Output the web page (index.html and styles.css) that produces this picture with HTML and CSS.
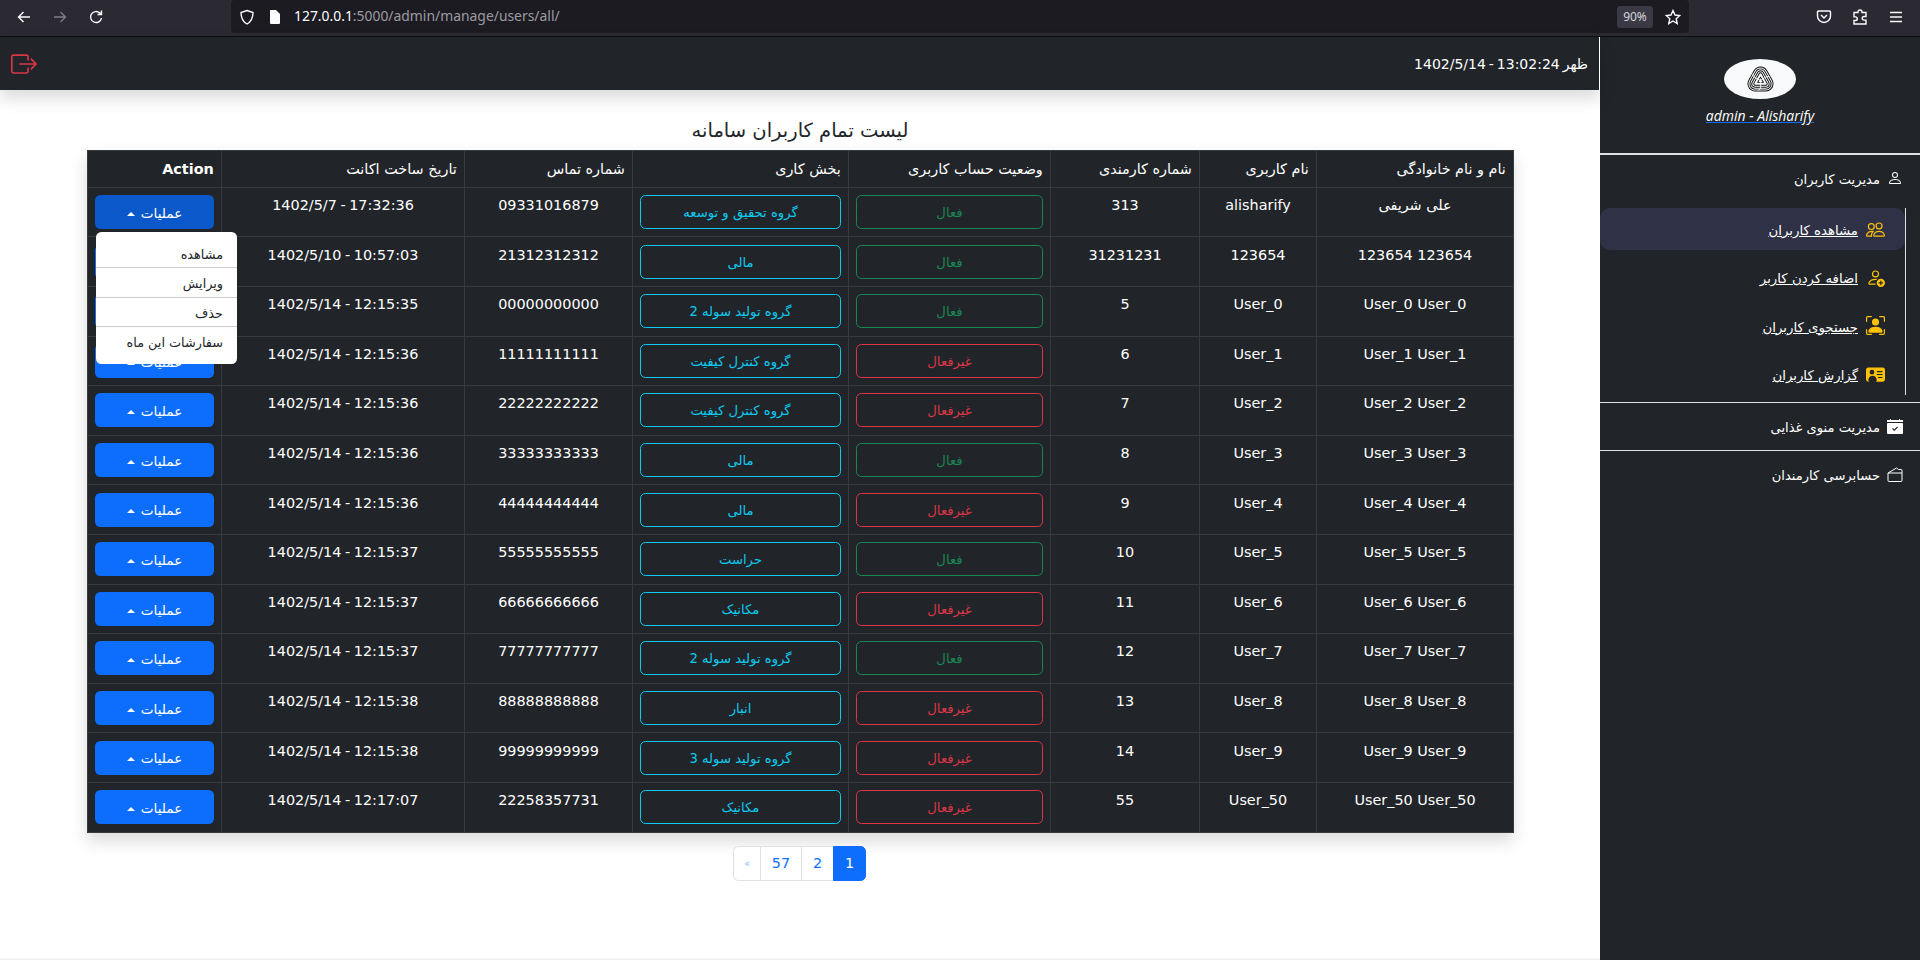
FILE: index.html
```html
<!DOCTYPE html>
<html lang="fa">
<head>
	<meta charset="utf-8">
	<title>Users</title>
	<link rel="stylesheet" href="styles.css">
</head>
<body>
	<div class="toolbar">
		<div class="nav-btns">
			<svg class="tb-icon" viewBox="0 0 16 16"><path d="M14 8H2.5M7.5 3 2.5 8l5 5"/></svg>
			<svg class="tb-icon off" viewBox="0 0 16 16"><path d="M2 8h11.500M8.500 3l5 5-5 5"/></svg>
			<svg class="tb-icon" viewBox="0 0 16 16"><path d="M13.500 9a5.500 5.500 0 1 1-1.800-5.100L13.500 5.500M13.500 1.500v4h-4"/></svg>
		</div>
		<div class="urlbar">
			<svg class="tb-icon shield" viewBox="0 0 16 16"><path d="M8 1.500 14 3.500c0 5.500-1.500 9-6 11.500-4.500-2.500-6-6-6-11.500z"/></svg>
			<svg class="tb-icon page" viewBox="0 0 16 16"><path class="solid" d="M3 1h6l4 4v9a1 1 0 0 1-1 1H4a1 1 0 0 1-1-1z"/></svg>
			<span class="url"><b>127.0.0.1</b>:5000/admin/manage/users/all/</span>
			<span class="zoom-pill">90%</span>
			<svg class="tb-icon star" viewBox="0 0 16 16"><path d="M8 1.500 10 6l4.800.5-3.600 3.200 1 4.800L8 12l-4.200 2.500 1-4.800L1.200 6.500 6 6z"/></svg>
		</div>
		<div class="tb-right">
			<svg class="tb-icon" viewBox="0 0 16 16"><path d="M2.500 2h11a1 1 0 0 1 1 1v4a6.500 6.500 0 0 1-13 0V3a1 1 0 0 1 1-1zM5 6l3 3 3-3"/></svg>
			<svg class="tb-icon" viewBox="0 0 16 16"><path d="M6 3.500V3a2 2 0 0 1 4 0v.5h4v4h-2a1.800 1.800 0 0 0 0 3.600h2V15H2v-3.500h1.500a1.800 1.800 0 0 0 0-3.600H2V3.500z"/></svg>
			<svg class="tb-icon" viewBox="0 0 16 16"><path d="M2 3.500h12M2 8h12M2 12.500h12"/></svg>
		</div>
	</div>

	<div class="app">
		<div class="main">
			<div class="topbar">
				<svg class="logout" viewBox="0 0 16 16"><path fill-rule="evenodd" d="M10 12.500a.5.5 0 0 1-.5.5h-8a.5.5 0 0 1-.5-.5v-9a.5.5 0 0 1 .5-.5h8a.5.5 0 0 1 .5.5v2a.5.5 0 0 0 1 0v-2A1.500 1.500 0 0 0 9.500 2h-8A1.500 1.500 0 0 0 0 3.500v9A1.500 1.500 0 0 0 1.500 14h8a1.500 1.500 0 0 0 1.500-1.500v-2a.5.5 0 0 0-1 0v2z"/><path fill-rule="evenodd" d="M15.854 8.354a.5.5 0 0 0 0-.708l-3-3a.5.5 0 0 0-.708.708L14.293 7.500H5.500a.5.5 0 0 0 0 1h8.793l-2.147 2.146a.5.5 0 0 0 .708.708l3-3z"/></svg>
				<span class="clock" dir="rtl">ظهر 13:02:24 - 1402/5/14</span>
			</div>

			<div class="content">
				<h4 class="title">لیست تمام کاربران سامانه</h4>
				<div class="table-wrap">
					<table class="users" dir="rtl">
						<colgroup>
							<col class="c-name"><col class="c-user"><col class="c-num"><col class="c-status"><col class="c-dept"><col class="c-phone"><col class="c-date"><col class="c-action">
						</colgroup>
						<thead>
							<tr>
								<th>نام و نام خانوادگی</th>
								<th>نام کاربری</th>
								<th>شماره کارمندی</th>
								<th>وضعیت حساب کاربری</th>
								<th>بخش کاری</th>
								<th>شماره تماس</th>
								<th>تاریخ ساخت اکانت</th>
								<th class="action-head">Action</th>
							</tr>
						</thead>
						<tbody>
							<tr>
								<td>علی شریفی</td><td>alisharify</td><td>313</td>
								<td><a class="pill on">فعال</a></td><td><a class="pill dept">گروه تحقیق و توسعه</a></td>
								<td>09331016879</td><td class="when">17:32:36 - 1402/5/7</td>
								<td class="action-cell">
									<button class="ops pressed">عملیات<i class="caret"></i></button>
									<ul class="menu">
										<li>مشاهده</li>
										<li>ویرایش</li>
										<li>حذف</li>
										<li>سفارشات این ماه</li>
									</ul>
								</td>
							</tr>
							<tr>
								<td>123654 123654</td><td>123654</td><td>31231231</td>
								<td><a class="pill on">فعال</a></td><td><a class="pill dept">مالی</a></td>
								<td>21312312312</td><td class="when">10:57:03 - 1402/5/10</td>
								<td><button class="ops">عملیات<i class="caret"></i></button></td>
							</tr>
							<tr>
								<td>User_0 User_0</td><td>User_0</td><td>5</td>
								<td><a class="pill on">فعال</a></td><td><a class="pill dept">گروه تولید سوله 2</a></td>
								<td>00000000000</td><td class="when">12:15:35 - 1402/5/14</td>
								<td><button class="ops">عملیات<i class="caret"></i></button></td>
							</tr>
							<tr>
								<td>User_1 User_1</td><td>User_1</td><td>6</td>
								<td><a class="pill off">غیرفعال</a></td><td><a class="pill dept">گروه کنترل کیفیت</a></td>
								<td>11111111111</td><td class="when">12:15:36 - 1402/5/14</td>
								<td><button class="ops">عملیات<i class="caret"></i></button></td>
							</tr>
							<tr>
								<td>User_2 User_2</td><td>User_2</td><td>7</td>
								<td><a class="pill off">غیرفعال</a></td><td><a class="pill dept">گروه کنترل کیفیت</a></td>
								<td>22222222222</td><td class="when">12:15:36 - 1402/5/14</td>
								<td><button class="ops">عملیات<i class="caret"></i></button></td>
							</tr>
							<tr>
								<td>User_3 User_3</td><td>User_3</td><td>8</td>
								<td><a class="pill on">فعال</a></td><td><a class="pill dept">مالی</a></td>
								<td>33333333333</td><td class="when">12:15:36 - 1402/5/14</td>
								<td><button class="ops">عملیات<i class="caret"></i></button></td>
							</tr>
							<tr>
								<td>User_4 User_4</td><td>User_4</td><td>9</td>
								<td><a class="pill off">غیرفعال</a></td><td><a class="pill dept">مالی</a></td>
								<td>44444444444</td><td class="when">12:15:36 - 1402/5/14</td>
								<td><button class="ops">عملیات<i class="caret"></i></button></td>
							</tr>
							<tr>
								<td>User_5 User_5</td><td>User_5</td><td>10</td>
								<td><a class="pill on">فعال</a></td><td><a class="pill dept">حراست</a></td>
								<td>55555555555</td><td class="when">12:15:37 - 1402/5/14</td>
								<td><button class="ops">عملیات<i class="caret"></i></button></td>
							</tr>
							<tr>
								<td>User_6 User_6</td><td>User_6</td><td>11</td>
								<td><a class="pill off">غیرفعال</a></td><td><a class="pill dept">مکانیک</a></td>
								<td>66666666666</td><td class="when">12:15:37 - 1402/5/14</td>
								<td><button class="ops">عملیات<i class="caret"></i></button></td>
							</tr>
							<tr>
								<td>User_7 User_7</td><td>User_7</td><td>12</td>
								<td><a class="pill on">فعال</a></td><td><a class="pill dept">گروه تولید سوله 2</a></td>
								<td>77777777777</td><td class="when">12:15:37 - 1402/5/14</td>
								<td><button class="ops">عملیات<i class="caret"></i></button></td>
							</tr>
							<tr>
								<td>User_8 User_8</td><td>User_8</td><td>13</td>
								<td><a class="pill off">غیرفعال</a></td><td><a class="pill dept">انبار</a></td>
								<td>88888888888</td><td class="when">12:15:38 - 1402/5/14</td>
								<td><button class="ops">عملیات<i class="caret"></i></button></td>
							</tr>
							<tr>
								<td>User_9 User_9</td><td>User_9</td><td>14</td>
								<td><a class="pill off">غیرفعال</a></td><td><a class="pill dept">گروه تولید سوله 3</a></td>
								<td>99999999999</td><td class="when">12:15:38 - 1402/5/14</td>
								<td><button class="ops">عملیات<i class="caret"></i></button></td>
							</tr>
							<tr>
								<td>User_50 User_50</td><td>User_50</td><td>55</td>
								<td><a class="pill off">غیرفعال</a></td><td><a class="pill dept">مکانیک</a></td>
								<td>22258357731</td><td class="when">12:17:07 - 1402/5/14</td>
								<td><button class="ops">عملیات<i class="caret"></i></button></td>
							</tr>
						</tbody>
					</table>
				</div>

				<div class="pager">
					<a class="page-link faded">«</a>
					<a class="page-link w-57">57</a>
					<a class="page-link">2</a>
					<a class="page-link current">1</a>
				</div>
			</div>
		</div>

		<aside class="sidebar">
			<div class="brand">
				<div class="logo">
					<svg viewBox="0 0 28 27">
						<g stroke-linejoin="round">
							<polygon class="ring-k" stroke-width="16" points="14,8.5 8.500,18.500 19.500,18.500"/>
							<polygon class="ring-w" stroke-width="14" points="14,8.5 8.500,18.500 19.500,18.500"/>
							<polygon class="ring-k" stroke-width="12" points="14,8.5 8.500,18.500 19.500,18.500"/>
							<polygon class="ring-w" stroke-width="10" points="14,8.5 8.500,18.500 19.500,18.500"/>
							<polygon class="ring-k" stroke-width="8" points="14,8.5 8.500,18.500 19.500,18.500"/>
							<polygon class="ring-w" stroke-width="6" points="14,8.5 8.500,18.500 19.500,18.500"/>
							<polygon class="ring-k" stroke-width="4" points="14,8.5 8.500,18.500 19.500,18.500"/>
							<polygon class="ring-w" stroke-width="2" points="14,8.5 8.500,18.500 19.500,18.500"/>
						</g>
						<g class="swirl">
							<path d="M14 15C17 13 22 9 24 12"/>
							<path d="M14 15C17 13 22 9 24 12" transform="rotate(120 14 15)"/>
							<path d="M14 15C17 13 22 9 24 12" transform="rotate(240 14 15)"/>
						</g>
					</svg>
				</div>
				<a class="who">admin - Alisharify</a>
			</div>

			<div class="menu-head first">
				<svg class="head-icon" viewBox="0 0 16 16"><path d="M8 8a3 3 0 1 0 0-6 3 3 0 0 0 0 6Zm2-3a2 2 0 1 1-4 0 2 2 0 0 1 4 0Zm4 8c0 1-1 1-1 1H3s-1 0-1-1 1-4 6-4 6 3 6 4Zm-1-.004c-.001-.246-.154-.986-.832-1.664C11.516 10.680 10.289 10 8 10c-2.290 0-3.516.680-4.168 1.332-.678.678-.830 1.418-.832 1.664h10Z"/></svg>
				<span>مدیریت کاربران</span>
			</div>
			<div class="submenu">
				<a class="sub active">
					<svg class="sub-icon" viewBox="0 0 16 16"><path d="M15 14s1 0 1-1-1-4-5-4-5 3-5 4 1 1 1 1h8Zm-7.978-1A.261.261 0 0 1 7 12.996c.001-.264.167-1.030.76-1.720C8.312 10.629 9.282 10 11 10c1.717 0 2.687.630 3.240 1.276.593.690.758 1.457.760 1.720l-.008.002a.274.274 0 0 1-.014.002H7.022ZM11 7a2 2 0 1 0 0-4 2 2 0 0 0 0 4Zm3-2a3 3 0 1 1-6 0 3 3 0 0 1 6 0ZM6.936 9.280a5.880 5.880 0 0 0-1.230-.247A7.350 7.350 0 0 0 5 9c-4 0-5 3-5 4 0 .667.333 1 1 1h4.216A2.238 2.238 0 0 1 5 13c0-1.010.377-2.042 1.090-2.904.243-.294.526-.569.846-.816ZM4.920 10A5.493 5.493 0 0 0 4 13H1c0-.260.164-1.030.760-1.724.545-.636 1.492-1.256 3.160-1.275ZM1.500 5.500a3 3 0 1 1 6 0 3 3 0 0 1-6 0Zm3-2a2 2 0 1 0 0 4 2 2 0 0 0 0-4Z"/></svg>
					<span>مشاهده کاربران</span>
				</a>
				<a class="sub">
					<svg class="sub-icon" viewBox="0 0 16 16"><path d="M12.500 16a3.500 3.500 0 1 0 0-7 3.500 3.500 0 0 0 0 7Zm.5-5v1h1a.5.5 0 0 1 0 1h-1v1a.5.5 0 0 1-1 0v-1h-1a.5.5 0 0 1 0-1h1v-1a.5.5 0 0 1 1 0Zm-2-6a3 3 0 1 1-6 0 3 3 0 0 1 6 0ZM8 7a2 2 0 1 0 0-4 2 2 0 0 0 0 4Z"/><path d="M8.256 14a4.474 4.474 0 0 1-.229-1.004H3c.001-.246.154-.986.832-1.664C4.484 10.680 5.711 10 8 10c.260 0 .507.009.740.025.226-.341.496-.650.804-.918C9.077 9.038 8.564 9 8 9c-5 0-6 3-6 4s1 1 1 1h5.256Z"/></svg>
					<span>اضافه کردن کاربر</span>
				</a>
				<a class="sub">
					<svg class="sub-icon" viewBox="0 0 16 16"><path d="M1.500 1a.5.5 0 0 0-.5.5v3a.5.5 0 0 1-1 0v-3A1.500 1.500 0 0 1 1.500 0h3a.5.5 0 0 1 0 1h-3zM11 .5a.5.5 0 0 1 .5-.5h3A1.500 1.500 0 0 1 16 1.500v3a.5.5 0 0 1-1 0v-3a.5.5 0 0 0-.5-.5h-3a.5.5 0 0 1-.5-.5zM.5 11a.5.5 0 0 1 .5.5v3a.5.5 0 0 0 .5.5h3a.5.5 0 0 1 0 1h-3A1.500 1.500 0 0 1 0 14.500v-3a.5.5 0 0 1 .5-.5zm15 0a.5.5 0 0 1 .5.5v3a1.500 1.500 0 0 1-1.500 1.500h-3a.5.5 0 0 1 0-1h3a.5.5 0 0 0 .5-.5v-3a.5.5 0 0 1 .5-.5z"/><path d="M3 14s-1 0-1-1 1-4 6-4 6 3 6 4-1 1-1 1H3zm8-9a3 3 0 1 1-6 0 3 3 0 0 1 6 0z"/></svg>
					<span>جستجوی کاربران</span>
				</a>
				<a class="sub">
					<svg class="sub-icon" viewBox="0 0 16 16"><path d="M0 4a2 2 0 0 1 2-2h12a2 2 0 0 1 2 2v8a2 2 0 0 1-2 2H2a2 2 0 0 1-2-2V4Zm9 1.500a.5.5 0 0 0 .5.5h4a.5.5 0 0 0 0-1h-4a.5.5 0 0 0-.5.5ZM9 8a.5.5 0 0 0 .5.5h4a.5.5 0 0 0 0-1h-4A.5.5 0 0 0 9 8Zm1 2.500a.5.5 0 0 0 .5.5h3a.5.5 0 0 0 0-1h-3a.5.5 0 0 0-.5.5Zm-1 2C9 10.567 7.490 9 5.500 9S2 10.567 2 12.500V13a1 1 0 0 0 1 1h5a1 1 0 0 0 1-1v-.5ZM7 6a2 2 0 1 0-4 0 2 2 0 0 0 4 0Z"/></svg>
					<span>گزارش کاربران</span>
				</a>
			</div>

			<div class="menu-head ruled">
				<svg class="head-icon" viewBox="0 0 16 16"><path d="M0 1h16v2H0z"/><path d="M3 0h1v1H3zM12 0h1v1h-1z"/><path d="M1 4h14a1 1 0 0 1 1 1v9a1 1 0 0 1-1 1H1a1 1 0 0 1-1-1V5a1 1 0 0 1 1-1z"/><path class="tick" d="M5.500 9.500 7.300 11.200 10.500 8"/></svg>
				<span>مدیریت منوی غذایی</span>
			</div>
			<div class="menu-head ruled">
				<svg class="head-icon line" viewBox="0 0 16 16"><path d="M1 6v7.500a1 1 0 0 0 1 1h12a1 1 0 0 0 1-1V3.500a1 1 0 0 0-1-1h-2.500L9.500 1 1 6zM1 6h14"/></svg>
				<span>حسابرسی کارمندان</span>
			</div>
		</aside>
	</div>
</body>
</html>
```

FILE: styles.css
```css
* {
	box-sizing: border-box;
}

html, body {
	margin: 0;
	height: 960px;
	overflow: hidden;
}

body {
	background: #fff;
	font-family: "DejaVu Sans", sans-serif;
	font-size: 14.4px;
	line-height: 1.5;
	color: #212529;
}

/* browser bar */
.toolbar {
	display: flex;
	align-items: center;
	height: 37px;
	padding-bottom: 3px;
	background: #2b2a33;
	border-bottom: 1px solid #0c0c0d;
	font-family: "Noto Sans", sans-serif;
}

.nav-btns {
	display: flex;
	width: 231px;
	padding-left: 16px;
	gap: 20px;
}

.tb-icon {
	width: 16px;
	height: 16px;
	flex: none;
	fill: none;
	stroke: #fbfbfe;
	stroke-width: 1.4;
}

.tb-icon.off {
	opacity: .4;
}

.tb-icon .solid {
	fill: #fbfbfe;
	stroke: none;
}

.urlbar {
	display: flex;
	align-items: center;
	width: 1458px;
	height: 33px;
	padding: 0 8px;
	border-radius: 4px;
	background: #1c1b22;
	color: #9c9ba3;
	font-size: 13.9px;
}

.urlbar .page {
	margin-left: 12px;
}

.url {
	margin-left: 11px;
	flex: 1;
}

.url b {
	font-weight: 400;
	color: #fbfbfe;
}

.zoom-pill {
	display: block;
	width: 36px;
	height: 22px;
	line-height: 22px;
	margin-right: 12px;
	border-radius: 3px;
	background: #3a3944;
	color: #d5d5da;
	font-size: 12px;
	text-align: center;
}

.tb-right {
	display: flex;
	gap: 20px;
	margin-left: 127px;
}

/* page */
.app {
	display: flex;
	height: 923px;
}

.main {
	width: 1600px;
	box-shadow: inset 0 -2px 2px -1px #e8e8e8;
}

.topbar {
	position: relative;
	display: flex;
	align-items: center;
	justify-content: space-between;
	height: 53px;
	padding: 0 11px 0 11px;
	background: #212529;
	border-right: 1px solid #fff;
	color: #fff;
	box-shadow: 0 8px 16px rgba(0, 0, 0, .15);
}

.clock {
	padding-top: 2px;
	font-size: 14px;
	word-spacing: -1.5px;
}

.logout {
	width: 26px;
	height: 26px;
	fill: #dc3545;
}

.content {
	padding: 0 87px;
}

.title {
	margin: 0;
	padding-top: 25px;
	height: 60px;
	font-size: 19.5px;
	font-weight: 400;
	line-height: 32px;
	text-align: center;
	direction: rtl;
}

.table-wrap {
	box-shadow: 0 8px 16px rgba(0, 0, 0, .15);
}

.users {
	width: 1426px;
	table-layout: fixed;
	border-collapse: collapse;
	background: #212529;
	color: #fff;
}

.c-name { width: 197px; }
.c-user { width: 117px; }
.c-num { width: 149px; }
.c-status { width: 202px; }
.c-dept { width: 216px; }
.c-phone { width: 168px; }
.c-date { width: 243px; }
.c-action { width: 134px; }

.users th,
.users td {
	padding: 7.2px;
	border: 1px solid #373b3e;
	vertical-align: top;
}

.users thead tr {
	height: 36.5px;
}

.users tbody tr {
	height: 49.6px;
}

.users th {
	padding-top: 8.2px;
	padding-bottom: 6px;
	font-weight: 400;
	text-align: right;
}

.users th.action-head {
	font-weight: 700;
}

.users td {
	text-align: center;
}

.users td.when {
	word-spacing: -1px;
}

.pill {
	display: block;
	height: 34px;
	padding-top: 1px;
	line-height: 32px;
	border: 1px solid;
	border-radius: 5.4px;
	font-size: 13.2px;
}

.on {
	color: #198754;
}

.off {
	color: #dc3545;
}

.dept {
	color: #0dcaf0;
}

.ops {
	display: block;
	width: 100%;
	height: 34px;
	padding: 2px 0 0;
	border: 0;
	border-radius: 5.4px;
	background: #0d6efd;
	color: #fff;
	font: inherit;
	font-size: 13.6px;
	direction: rtl;
}

.ops.pressed {
	background: #0a58ca;
}

.caret {
	display: inline-block;
	margin-right: 6px;
	border-right: 4.3px solid transparent;
	border-left: 4.3px solid transparent;
	border-bottom: 4.3px solid #fff;
	vertical-align: 2px;
}

.action-cell {
	position: relative;
}

.menu {
	position: absolute;
	top: 44px;
	left: 8px;
	z-index: 5;
	width: 141px;
	margin: 0;
	padding: 7px 0;
	list-style: none;
	background: #fff;
	border-radius: 5.4px;
	color: #212529;
	font-size: 12.8px;
	text-align: right;
	direction: rtl;
}

.menu li {
	height: 29.5px;
	padding: 2px 14px 0;
	line-height: 27px;
	border-bottom: 1px solid #ccc;
}

.menu li:last-child {
	border-bottom: 0;
}

.pager {
	display: flex;
	justify-content: center;
	margin-top: 13px;
}

.page-link {
	display: block;
	width: 33px;
	height: 35px;
	line-height: 33px;
	border: 1px solid #dee2e6;
	margin-left: -1px;
	background: #fff;
	color: #0d6efd;
	text-align: center;
}

.page-link:first-child {
	width: 28px;
	border-radius: 5.4px 0 0 5.4px;
}

.page-link.w-57 {
	width: 42px;
}

.page-link.faded {
	color: #8db9fe;
	font-size: 10px;
}

.page-link.current {
	border-color: #0d6efd;
	border-radius: 0 5.4px 5.4px 0;
	background: #0d6efd;
	color: #fff;
}

/* sidebar */
.sidebar {
	width: 320px;
	background: #212529;
	color: #fff;
}

.brand {
	height: 116px;
	padding-top: 22px;
	text-align: center;
}

.logo {
	display: flex;
	align-items: center;
	justify-content: center;
	width: 72px;
	height: 40px;
	margin: 0 auto;
	border-radius: 50%;
	background: #f8f9fa;
}

.logo svg {
	width: 27px;
	height: 26px;
}

.ring-k,
.ring-w {
	fill: none;
}

.ring-k {
	stroke: #111;
}

.ring-w {
	stroke: #f8f9fa;
}

.swirl path {
	fill: none;
	stroke: #f8f9fa;
	stroke-width: .9;
}

.who {
	display: inline-block;
	margin-top: 6px;
	font-family: "Open Sans", sans-serif;
	font-style: italic;
	font-size: 14px;
	text-decoration: underline;
	text-decoration-color: #0d6efd;
}

.menu-head {
	display: flex;
	align-items: center;
	gap: 7px;
	height: 48px;
	padding-right: 17px;
	direction: rtl;
	font-size: 13.1px;
	border-top: 1px solid #dee2e6;
}

.menu-head span {
	padding-top: 3px;
}

.menu-head.first {
	height: 55px;
	padding-bottom: 7px;
	border-top-width: 2px;
}

.head-icon {
	width: 16px;
	height: 16px;
	fill: #fff;
}

.head-icon .tick {
	fill: none;
	stroke: #212529;
	stroke-width: 1.1;
}

.head-icon.line {
	fill: none;
	stroke: #fff;
	stroke-width: 1;
}

.submenu {
	width: 306px;
	height: 187px;
	margin-bottom: 7px;
	border-right: 1px solid #dee2e6;
}

.sub {
	display: flex;
	align-items: center;
	gap: 8px;
	height: 48.5px;
	padding-right: 20px;
	direction: rtl;
	font-size: 13.3px;
	color: #fff;
	border-radius: 10px;
}

.sub span {
	padding-top: 4px;
	text-decoration: underline;
}

.sub.active {
	height: 42px;
	margin-bottom: 3px;
	background: #2f3146;
}

.sub-icon {
	width: 19px;
	height: 19px;
	flex: none;
	fill: #ffc107;
}
```
